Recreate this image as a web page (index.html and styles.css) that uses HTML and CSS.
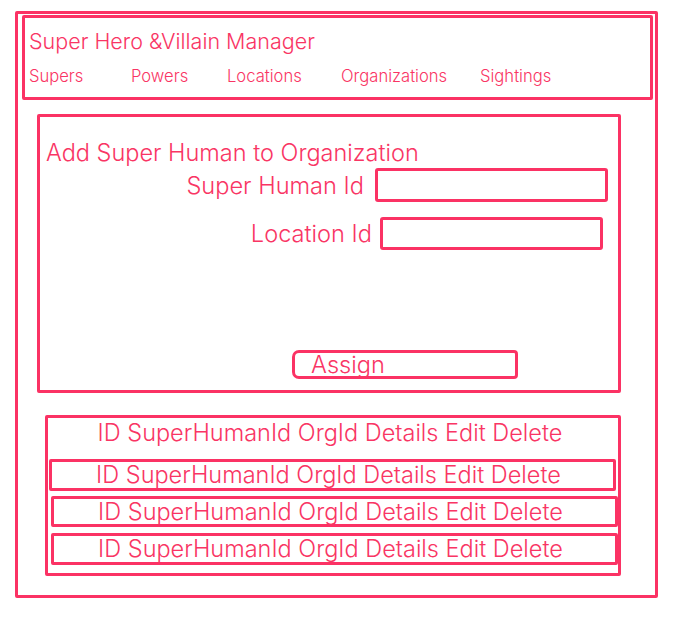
FILE: index.html
```html
<!DOCTYPE html>
<html lang="en">
<head>
<meta charset="utf-8">
<title>Super Hero &amp;Villain Manager</title>
<link rel="stylesheet" href="styles.css">
</head>
<body>
<div class="frame">
  <header class="header box">
    <div class="app-title">Super Hero &amp;Villain Manager</div>
    <nav class="nav">
      <a>Supers</a>
      <a>Powers</a>
      <a>Locations</a>
      <a>Organizations</a>
      <a>Sightings</a>
    </nav>
  </header>

  <section class="form box">
    <div class="form-title">Add Super Human to Organization</div>
    <div class="field field-a">
      <label class="label">Super Human Id</label>
      <div class="input box"></div>
    </div>
    <div class="field field-b">
      <label class="label">Location Id</label>
      <div class="input box"></div>
    </div>
    <div class="assign box">Assign</div>
  </section>

  <section class="list box">
    <div class="list-head">ID SuperHumanId OrgId Details Edit Delete</div>
    <div class="row row-1 box">ID SuperHumanId OrgId Details Edit Delete</div>
    <div class="row row-2 box">ID SuperHumanId OrgId Details Edit Delete</div>
    <div class="row row-3 box">ID SuperHumanId OrgId Details Edit Delete</div>
  </section>
</div>
</body>
</html>
```

FILE: styles.css
```css
* { box-sizing: border-box; }

html, body {
  margin: 0;
  padding: 0;
  background: #ffffff;
}

body {
  font-family: Inter, "Noto Sans", sans-serif;
  color: #f93564;
  font-weight: 300;
}

.box {
  border: 3px solid #fb3264;
  border-radius: 2px;
}

.frame {
  margin: 11px 0 0 15px;
  width: 643px;
  height: 587px;
  border: 3px solid #fb3264;
  border-radius: 2px;
  display: flex;
  flex-direction: column;
  align-items: flex-start;
}

/* header */
.header {
  margin: 1px 0 0 4px;
  width: 631px;
  height: 85px;
  padding: 10px 0 0 4px;
}

.app-title {
  font-size: 21.5px;
  line-height: 26px;
}

.nav {
  margin-top: 12px;
  display: grid;
  grid-template-columns: 102px 96px 114px 139px auto;
  font-size: 16.6px;
  line-height: 20px;
}

/* form */
.form {
  margin: 14px 0 0 19px;
  width: 584px;
  height: 279px;
  padding: 22px 0 0 6px;
  display: flex;
  flex-direction: column;
  align-items: flex-start;
}

.form-title {
  font-size: 23.5px;
  line-height: 28px;
}

.field {
  display: flex;
  align-items: center;
  font-size: 23.6px;
}

.label {
  text-align: right;
}

.field-a {
  margin-top: 1px;
}
.field-a .label { width: 318px; }
.field-a .input {
  margin-left: 11px;
  width: 233px;
  height: 34px;
  border-radius: 3px;
}

.field-b {
  margin-top: 15px;
}
.field-b .label { width: 326px; }
.field-b .input {
  margin-left: 8px;
  width: 223px;
  height: 33px;
  border-radius: 3px;
}

.assign {
  margin: 100px 0 0 246px;
  width: 226px;
  height: 29px;
  padding-left: 16px;
  font-size: 23.6px;
  line-height: 23px;
  border-radius: 7px 4px 4px 7px;
}

/* list */
.list {
  margin: 22px 0 0 27px;
  width: 576px;
  height: 161px;
  padding-top: 2px;
  display: flex;
  flex-direction: column;
  align-items: flex-start;
}

.list-head {
  width: 100%;
  text-align: center;
  font-size: 23.5px;
  line-height: 26px;
  padding-right: 6px;
}

.row {
  width: 567px;
  height: 32px;
  text-align: center;
  font-size: 23.5px;
  line-height: 26px;
  padding-right: 8px;
}

.row-1 { margin: 13px 0 0 1px; }
.row-2 { margin: 5px 0 0 3px; height: 31px; line-height: 25px; }
.row-3 { margin: 6px 0 0 3px; }
```
